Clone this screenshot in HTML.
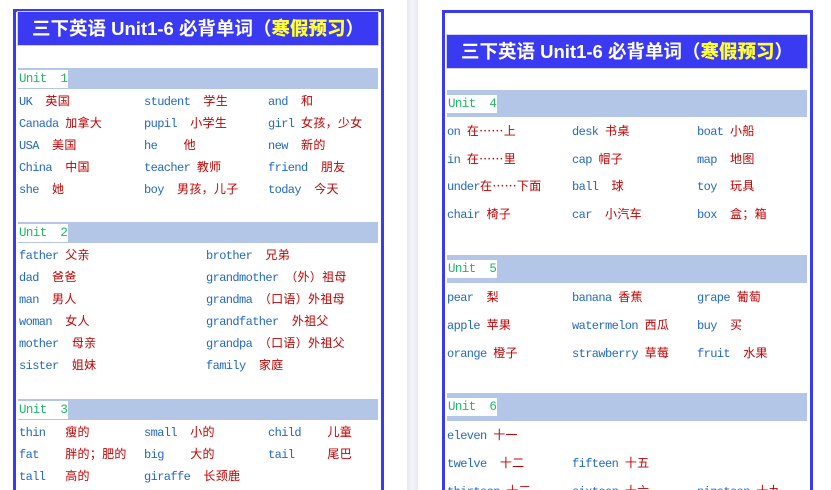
<!DOCTYPE html>
<html style="width:831px;height:490px;overflow:hidden"><head><meta charset="utf-8"><style>
*{margin:0;padding:0;box-sizing:border-box}
body{width:831px;height:490px;background:#fff;position:relative;overflow:hidden;font-family:"Liberation Mono","Noto Sans CJK SC",monospace}
.strip{position:absolute;left:407px;top:0;width:11px;height:490px;background:linear-gradient(90deg,#e6e8ee,#f4f5f8,#e6e8ee)}
.page{position:absolute;border:3px solid #3a3af2;border-bottom:none;background:#fff}
.title{position:absolute;background:#3a3af2;color:#fff;font:bold 18.5px "Liberation Sans","Noto Sans CJK SC",sans-serif;text-align:center;line-height:33px;height:33px;box-shadow:0 0 0 1px #d0d4f0;white-space:nowrap}
.title b{color:#ffff33}
.band{position:absolute;background:#b4c6e7;height:21px}
.band span{position:absolute;left:0;top:2px;height:18px;width:50px;background:#fff;color:#20b868;font-size:12.5px;letter-spacing:-0.6px;line-height:18px;padding-left:1px;white-space:pre}
.w{position:absolute;font-size:12px;letter-spacing:-0.6px;color:#2468c0;white-space:pre;line-height:14px}
.w i{font-style:normal;color:#c00000;font-family:"Noto Sans CJK SC","WenQuanYi Zen Hei",sans-serif;font-size:12px;letter-spacing:0.3px}
</style></head><body>
<div class="strip"></div>
<div class="page" style="left:13px;top:9px;width:371px;height:481px"></div>
<div class="title" style="left:18px;top:12px;width:360px">三下英语 Unit1-6 必背单词（<b>寒假预习</b>）</div>
<div class="band" style="left:18px;top:68px;width:360px"><span>Unit  1</span></div>
<div class="band" style="left:18px;top:222px;width:360px"><span>Unit  2</span></div>
<div class="band" style="left:18px;top:399px;width:360px"><span>Unit  3</span></div>

<div class="w" style="left:19px;top:94px">UK  <i>英国</i></div>
<div class="w" style="left:19px;top:116px">Canada <i>加拿大</i></div>
<div class="w" style="left:19px;top:138px">USA  <i>美国</i></div>
<div class="w" style="left:19px;top:160px">China  <i>中国</i></div>
<div class="w" style="left:19px;top:182px">she  <i>她</i></div>
<div class="w" style="left:144px;top:94px">student  <i>学生</i></div>
<div class="w" style="left:144px;top:116px">pupil  <i>小学生</i></div>
<div class="w" style="left:144px;top:138px">he    <i>他</i></div>
<div class="w" style="left:144px;top:160px">teacher <i>教师</i></div>
<div class="w" style="left:144px;top:182px">boy  <i>男孩，儿子</i></div>
<div class="w" style="left:268px;top:94px">and  <i>和</i></div>
<div class="w" style="left:268px;top:116px">girl <i>女孩，少女</i></div>
<div class="w" style="left:268px;top:138px">new  <i>新的</i></div>
<div class="w" style="left:268px;top:160px">friend  <i>朋友</i></div>
<div class="w" style="left:268px;top:182px">today  <i>今天</i></div>

<div class="w" style="left:19px;top:248px">father <i>父亲</i></div>
<div class="w" style="left:19px;top:270px">dad  <i>爸爸</i></div>
<div class="w" style="left:19px;top:292px">man  <i>男人</i></div>
<div class="w" style="left:19px;top:314px">woman  <i>女人</i></div>
<div class="w" style="left:19px;top:336px">mother  <i>母亲</i></div>
<div class="w" style="left:19px;top:358px">sister  <i>姐妹</i></div>
<div class="w" style="left:206px;top:248px">brother  <i>兄弟</i></div>
<div class="w" style="left:206px;top:270px">grandmother <i>（外）祖母</i></div>
<div class="w" style="left:206px;top:292px">grandma <i>（口语）外祖母</i></div>
<div class="w" style="left:206px;top:314px">grandfather  <i>外祖父</i></div>
<div class="w" style="left:206px;top:336px">grandpa <i>（口语）外祖父</i></div>
<div class="w" style="left:206px;top:358px">family  <i>家庭</i></div>

<div class="w" style="left:19px;top:425px">thin   <i>瘦的</i></div>
<div class="w" style="left:19px;top:447px">fat    <i>胖的；肥的</i></div>
<div class="w" style="left:19px;top:469px">tall   <i>高的</i></div>
<div class="w" style="left:144px;top:425px">small  <i>小的</i></div>
<div class="w" style="left:144px;top:447px">big    <i>大的</i></div>
<div class="w" style="left:144px;top:469px">giraffe  <i>长颈鹿</i></div>
<div class="w" style="left:268px;top:425px">child    <i>儿童</i></div>
<div class="w" style="left:268px;top:447px">tail     <i>尾巴</i></div>

<div class="page" style="left:442px;top:10px;width:371px;height:480px"></div>
<div class="title" style="left:447px;top:35px;width:360px">三下英语 Unit1-6 必背单词（<b>寒假预习</b>）</div>
<div class="band" style="left:447px;top:90px;width:360px;height:27px"><span style="top:5px">Unit  4</span></div>
<div class="band" style="left:447px;top:255px;width:360px;height:28px"><span style="top:5px">Unit  5</span></div>
<div class="band" style="left:447px;top:393px;width:360px;height:28px"><span style="top:5px">Unit  6</span></div>

<div class="w" style="left:447px;top:124px">on <i>在……上</i></div>
<div class="w" style="left:447px;top:152px">in <i>在……里</i></div>
<div class="w" style="left:447px;top:179px">under<i>在……下面</i></div>
<div class="w" style="left:447px;top:207px">chair <i>椅子</i></div>
<div class="w" style="left:572px;top:124px">desk <i>书桌</i></div>
<div class="w" style="left:572px;top:152px">cap <i>帽子</i></div>
<div class="w" style="left:572px;top:179px">ball  <i>球</i></div>
<div class="w" style="left:572px;top:207px">car  <i>小汽车</i></div>
<div class="w" style="left:697px;top:124px">boat <i>小船</i></div>
<div class="w" style="left:697px;top:152px">map  <i>地图</i></div>
<div class="w" style="left:697px;top:179px">toy  <i>玩具</i></div>
<div class="w" style="left:697px;top:207px">box  <i>盒；箱</i></div>

<div class="w" style="left:447px;top:290px">pear  <i>梨</i></div>
<div class="w" style="left:447px;top:318px">apple <i>苹果</i></div>
<div class="w" style="left:447px;top:346px">orange <i>橙子</i></div>
<div class="w" style="left:572px;top:290px">banana <i>香蕉</i></div>
<div class="w" style="left:572px;top:318px">watermelon <i>西瓜</i></div>
<div class="w" style="left:572px;top:346px">strawberry <i>草莓</i></div>
<div class="w" style="left:697px;top:290px">grape <i>葡萄</i></div>
<div class="w" style="left:697px;top:318px">buy  <i>买</i></div>
<div class="w" style="left:697px;top:346px">fruit  <i>水果</i></div>

<div class="w" style="left:447px;top:428px">eleven <i>十一</i></div>
<div class="w" style="left:447px;top:456px">twelve  <i>十二</i></div>
<div class="w" style="left:447px;top:484px">thirteen <i>十三</i></div>
<div class="w" style="left:572px;top:456px">fifteen <i>十五</i></div>
<div class="w" style="left:572px;top:484px">sixteen <i>十六</i></div>
<div class="w" style="left:697px;top:484px">nineteen <i>十九</i></div>
</body></html>
